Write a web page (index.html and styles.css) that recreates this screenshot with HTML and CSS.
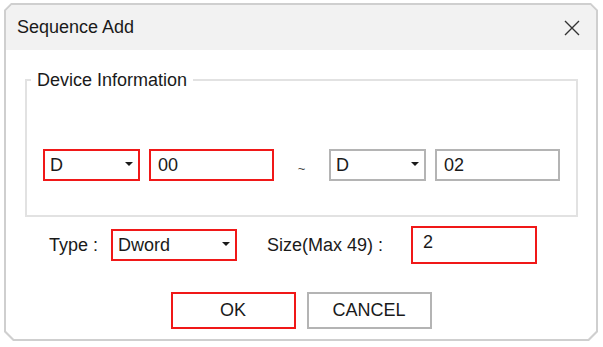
FILE: index.html
```html
<!DOCTYPE html>
<html lang="en">
<head>
    <meta charset="UTF-8">
    <meta name="viewport" content="width=device-width, initial-scale=1.0">
    <title>Sequence Add</title>
    <link rel="stylesheet" href="styles.css">
</head>
<body>
    <div class="dialog">
        <div class="dialog-inner">
            <div class="title-bar">
                <span class="title">Sequence Add</span>
                <svg class="close-icon" width="16" height="16" viewBox="0 0 16 16">
                    <path d="M1 1 L15 15 M15 1 L1 15" stroke="#333" stroke-width="1.4" fill="none"/>
                </svg>
            </div>

            <fieldset class="device-info">
                <legend>Device Information</legend>
                <div class="device-row">
                    <div class="select select-device error-border">
                        <span>D</span>
                        <span class="arrow"></span>
                    </div>
                    <div class="input input-address error-border">00</div>
                    <div class="tilde">~</div>
                    <div class="select select-device">
                        <span>D</span>
                        <span class="arrow"></span>
                    </div>
                    <div class="input input-address">02</div>
                </div>
            </fieldset>

            <div class="type-row">
                <span class="label">Type :</span>
                <div class="select select-type error-border">
                    <span>Dword</span>
                    <span class="arrow"></span>
                </div>
                <span class="label label-size">Size(Max 49) :</span>
                <div class="input input-size error-border">2</div>
            </div>

            <div class="button-row">
                <button class="btn btn-ok">OK</button>
                <button class="btn btn-cancel">CANCEL</button>
            </div>
        </div>
    </div>
</body>
</html>
```

FILE: styles.css
```css
* {
    box-sizing: border-box;
    margin: 0;
    padding: 0;
}

body {
    font-family: "Liberation Sans", Arial, sans-serif;
    font-size: 18px;
    color: #1a1a1a;
    background: #ffffff;
    padding: 3px 5px 0 4px;
}

.dialog {
    width: 594px;
    height: 338px;
    padding: 2px;
    background: #cfcfcf;
    clip-path: polygon(7px 0, calc(100% - 7px) 0, 100% 7px, 100% calc(100% - 9px), calc(100% - 9px) 100%, 9px 100%, 0 calc(100% - 9px), 0 7px);
}

.dialog-inner {
    height: 100%;
    background: #ffffff;
    clip-path: polygon(6px 0, calc(100% - 6px) 0, 100% 6px, 100% calc(100% - 8px), calc(100% - 8px) 100%, 8px 100%, 0 calc(100% - 8px), 0 6px);
}

.title-bar {
    height: 45px;
    background: #f2f2f2;
    display: flex;
    align-items: center;
    justify-content: space-between;
    padding: 0 16px 0 11px;
}

.close-icon {
    display: block;
}

.device-info {
    margin: 20px 19px 0 19px;
    border: 2px solid #e2e2e2;
    padding: 0;
}

.device-info legend {
    margin-left: 4px;
    padding: 0 6px;
    line-height: 20px;
}

.device-row {
    display: flex;
    align-items: center;
    padding: 59px 16px 34px 16px;
}

.select,
.input {
    display: flex;
    align-items: center;
    border: 2px solid #b4b4b4;
    background: #ffffff;
    height: 32px;
}

.error-border {
    border-color: #f01818;
}

.select {
    justify-content: space-between;
    padding: 0 5px;
}

.arrow {
    width: 0;
    height: 0;
    border-left: 4px solid transparent;
    border-right: 4px solid transparent;
    border-top: 4px solid #1a1a1a;
    margin-top: -2px;
}

.select-device {
    width: 97px;
}

.device-row .select-device + .input {
    margin-left: 9px;
}

.input-address {
    width: 125px;
    padding-left: 7px;
}

.tilde {
    width: 55px;
    text-align: center;
    font-size: 13px;
    color: #444;
    padding-top: 6px;
}

.type-row {
    display: grid;
    grid-template-columns: 62px 126px 174px 126px;
    align-items: center;
    margin: 9px 0 0 43px;
}

.label-size {
    padding-left: 30px;
}

.input-size {
    height: 38px;
    padding: 0 0 6px 10px;
}

.button-row {
    display: flex;
    justify-content: center;
    gap: 11px;
    margin-top: 28px;
}

.btn {
    width: 125px;
    height: 37px;
    font-family: inherit;
    font-size: 18px;
    color: #1a1a1a;
    background: #ffffff;
    border: 2px solid #b4b4b4;
}

.btn-ok {
    border-color: #f01818;
}
```
